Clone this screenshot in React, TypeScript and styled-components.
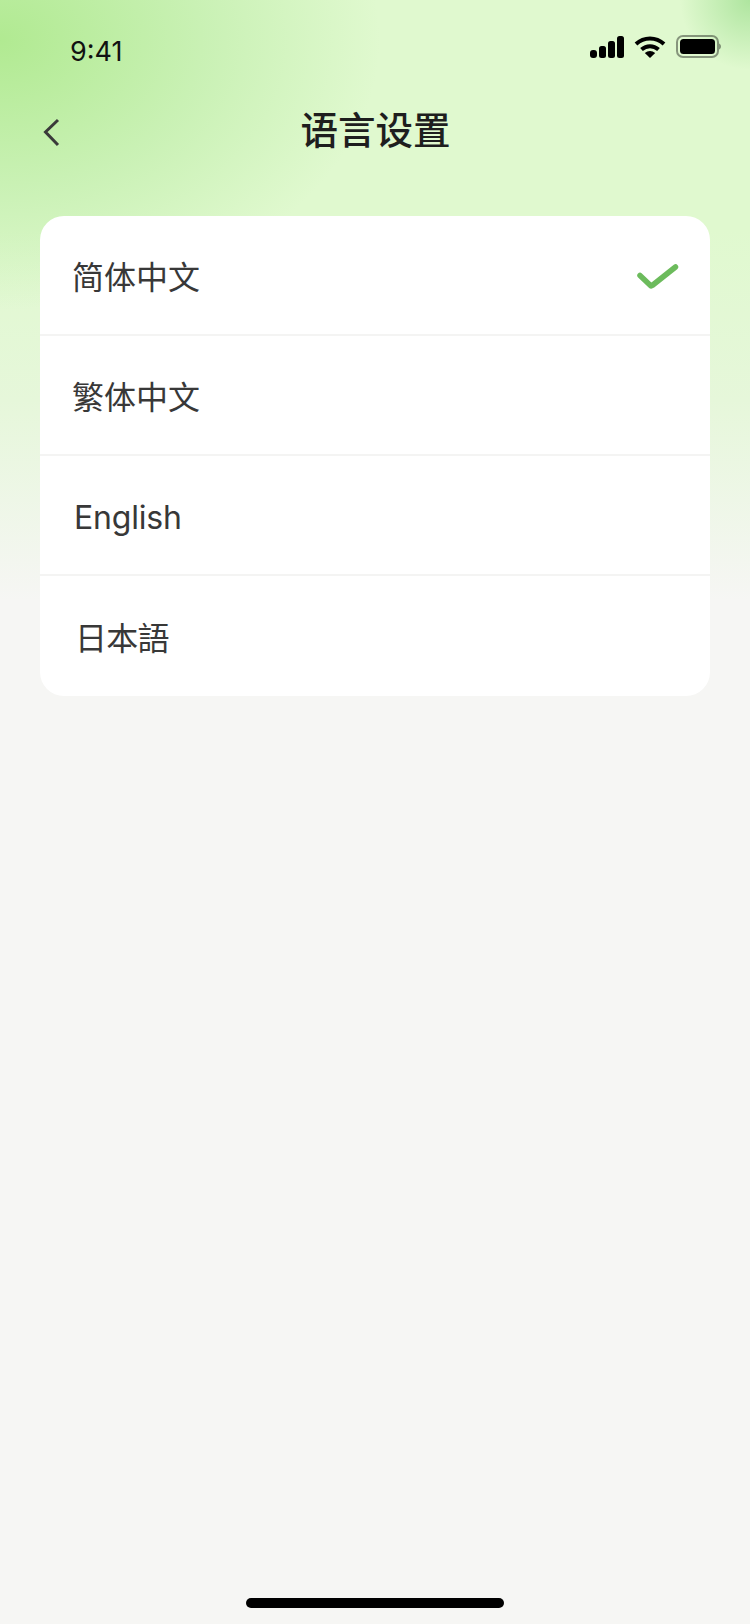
import React from 'react'
import styled, { createGlobalStyle } from 'styled-components'

const GlobalStyle = createGlobalStyle`
  html, body {
    margin: 0;
    padding: 0;
  }
  body {
    font-family: "Inter", "Noto Sans CJK SC", sans-serif;
    background: #f6f6f4;
  }
`

const Page = styled.div`
  width: 750px;
  height: 1624px;
  display: flex;
  flex-direction: column;
  overflow: hidden;
  background:
    radial-gradient(circle 70px at 750px 0px, rgba(165, 225, 150, 0.85) 0%, rgba(165, 225, 150, 0) 100%),
    radial-gradient(ellipse 380px 270px at 0px 40px, rgba(165, 230, 130, 0.8) 0%, rgba(175, 232, 150, 0.45) 55%, rgba(175, 232, 145, 0) 100%),
    linear-gradient(180deg, #e0f9cf 0px, #e0f9cf 230px, #e6f7da 400px, #f6f6f4 600px, #f6f6f4 100%);
`

const StatusBar = styled.div`
  height: 88px;
  padding: 0 29px 0 70px;
  box-sizing: border-box;
  display: flex;
  align-items: flex-start;
  justify-content: space-between;
`

const Time = styled.span`
  margin-top: 35px;
  font-size: 27px;
  line-height: 34px;
  color: #111;
`

const StatusIcons = styled.div`
  margin-top: 35px;
  display: flex;
  align-items: center;
  gap: 10px;
`

const NavBar = styled.div`
  position: relative;
  height: 88px;
  display: flex;
  align-items: center;
  justify-content: center;
`

const BackButton = styled.button`
  position: absolute;
  left: 40px;
  top: 28px;
  padding: 0;
  border: 0;
  background: none;
  display: flex;
`

const Title = styled.h1`
  margin: 0 0 3px 1px;
  font-size: 37.5px;
  line-height: 48px;
  font-weight: 500;
  color: #1e1e1e;
`

const Card = styled.div`
  margin: 40px 40px 0;
  background: #fff;
  border-radius: 24px;
  overflow: hidden;
`

const Row = styled.div<{ $last?: boolean }>`
  height: 120px;
  box-sizing: border-box;
  padding: 6px 31px 0 32px;
  display: flex;
  align-items: center;
  justify-content: space-between;
  border-bottom: ${({ $last }) => ($last ? 'none' : '2px solid #f4f4f3')};
`

const Label = styled.span<{ $inset?: number; $tracking?: number }>`
  margin-left: ${({ $inset }) => $inset ?? 0}px;
  letter-spacing: ${({ $tracking }) => $tracking ?? 0}px;
  font-size: 32px;
  line-height: 40px;
  color: #383838;
`

const HomeBar = styled.div`
  margin: auto auto 16px;
  width: 258px;
  height: 10px;
  border-radius: 5px;
  background: #000;
`

const languages = [
  { name: '简体中文', inset: 0, tracking: 0, selected: true },
  { name: '繁体中文', inset: 0, tracking: 0 },
  { name: 'English', inset: 2, tracking: -0.2 },
  { name: '日本語', inset: 3, tracking: -0.7 },
]

const App: React.FC = () => {
  return (
    <Page>
      <GlobalStyle />
      <StatusBar>
        <Time>9:41</Time>
        <StatusIcons>
          <svg width="34" height="22" viewBox="0 0 34 22">
            <rect x="0" y="14" width="7" height="8" rx="3" fill="#000" />
            <rect x="9" y="10" width="7" height="12" rx="2.5" fill="#000" />
            <rect x="18" y="5" width="7" height="17" rx="2.5" fill="#000" />
            <rect x="27" y="0" width="7" height="22" rx="2.5" fill="#000" />
          </svg>
          <svg width="32" height="22" viewBox="0 0 32 22">
            <path d="M2 8C10 0.6 22 0.6 30 8" fill="none" stroke="#000" strokeWidth="4" strokeLinecap="butt" />
            <path d="M7.5 13.6C12.5 9.2 19.5 9.2 24.5 13.6" fill="none" stroke="#000" strokeWidth="4" strokeLinecap="butt" />
            <path d="M10.8 17C14 14.2 18 14.2 21.2 17L16 22Z" fill="#000" />
          </svg>
          <svg width="45" height="23" viewBox="0 0 45 23">
            <rect x="1" y="1" width="41" height="21" rx="6" fill="none" stroke="#000" strokeOpacity="0.4" strokeWidth="2" />
            <rect x="4" y="4" width="35" height="15" rx="3.5" fill="#000" />
            <path d="M43 8.5C44.3 9 45 10.2 45 11.5C45 12.8 44.3 14 43 14.5Z" fill="#000" fillOpacity="0.4" />
          </svg>
        </StatusIcons>
      </StatusBar>
      <NavBar>
        <BackButton aria-label="返回">
          <svg width="24" height="32" viewBox="0 0 24 32">
            <path d="M18 4L5.5 16L18 29" fill="none" stroke="#3a3a3a" strokeWidth="3" />
          </svg>
        </BackButton>
        <Title>语言设置</Title>
      </NavBar>
      <Card>
        {languages.map((lang, i) => (
          <Row key={lang.name} $last={i === languages.length - 1}>
            <Label $inset={lang.inset} $tracking={lang.tracking}>{lang.name}</Label>
            {lang.selected && (
              <svg width="42" height="30" viewBox="0 0 42 30">
                <path
                  d="M3 12.5L13.5 22.5C14 23 14.6 23 15.2 22.5L38.5 4"
                  fill="none"
                  stroke="#6cbb5c"
                  strokeWidth="5.5"
                  strokeLinecap="round"
                  strokeLinejoin="round"
                />
              </svg>
            )}
          </Row>
        ))}
      </Card>
      <HomeBar />
    </Page>
  )
}

export default App
